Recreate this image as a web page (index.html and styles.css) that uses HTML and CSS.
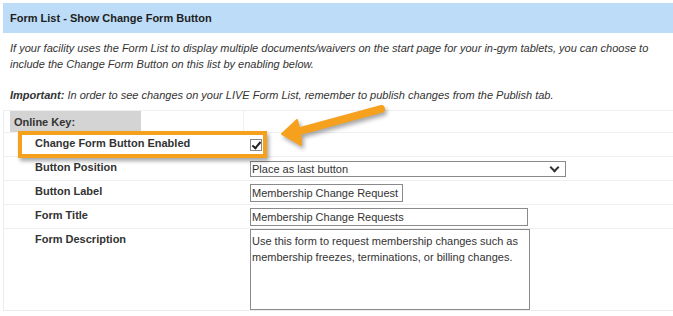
FILE: index.html
```html
<!DOCTYPE html>
<html lang="en">
<head>
    <meta charset="UTF-8">
    <meta name="viewport" content="width=device-width, initial-scale=1.0">
    <title>Form List - Show Change Form Button</title>
    <link rel="stylesheet" href="styles.css">
</head>
<body>
    <div class="page">
        <div class="section-title">Form List - Show Change Form Button</div>

        <p class="intro">If your facility uses the Form List to display multiple documents/waivers on the start page for your in-gym tablets, you can choose to include the Change Form Button on this list by enabling below.</p>
        <p class="intro important"><b>Important:</b> In order to see changes on your LIVE Form List, remember to publish changes from the Publish tab.</p>

        <table class="settings">
            <tr class="key-row">
                <td class="label-col"><span class="key-label">Online Key:</span></td>
                <td class="value-col"></td>
            </tr>
            <tr>
                <td class="label">Change Form Button Enabled</td>
                <td class="value"><input type="checkbox" class="check" checked></td>
            </tr>
            <tr>
                <td class="label">Button Position</td>
                <td class="value">
                    <span class="select-wrap">
                        <select class="position">
                            <option>Place as last button</option>
                            <option>Place as first button</option>
                        </select>
                    </span>
                </td>
            </tr>
            <tr>
                <td class="label">Button Label</td>
                <td class="value"><input type="text" class="field short" value="Membership Change Request"></td>
            </tr>
            <tr>
                <td class="label">Form Title</td>
                <td class="value"><input type="text" class="field wide" value="Membership Change Requests"></td>
            </tr>
            <tr class="desc-row">
                <td class="label">Form Description</td>
                <td class="value"><textarea class="description">Use this form to request membership changes such as membership freezes, terminations, or billing changes.</textarea></td>
            </tr>
        </table>

        <!-- annotation over the screenshot -->
        <div class="highlight"></div>
        <svg class="arrow" width="130" height="60" viewBox="0 0 130 60">
            <line x1="30" y1="36" x2="111" y2="14" stroke="#f6a11e" stroke-width="8" stroke-linecap="round"/>
            <path d="M12 39 L27 25 Q29 33 30 36 Q31 42 31 50 Z" fill="#f6a11e" stroke="#f6a11e" stroke-width="2" stroke-linejoin="round"/>
        </svg>
    </div>
</body>
</html>
```

FILE: styles.css
```css
* {
    box-sizing: border-box;
}

body {
    margin: 0;
    font-family: "Liberation Sans", Arial, sans-serif;
    font-size: 11px;
    color: #333;
    background: #fff;
    overflow: hidden;
}

.page {
    position: relative;
    padding: 3px 0 0 3px;
    height: 316px;
}

.section-title {
    height: 30px;
    line-height: 30px;
    padding-left: 7px;
    background-color: #bcdcf7;
    font-weight: bold;
    color: #1e1e1e;
}

.intro {
    margin: 7px 0 0;
    padding-left: 7px;
    font-style: italic;
    line-height: 16px;
}

.intro.important {
    margin-top: 15px;
}

.intro b {
    font-weight: bold;
}

/* settings table */
.settings {
    margin-top: 7px;
    width: 100%;
    border-collapse: separate;
    border-spacing: 0;
    border-left: 1px solid #ececec;
    border-bottom: 1px solid #ececec;
}

.settings td {
    border-top: 1px solid #efefef;
    height: 24px;
    padding: 0 6px;
}

.key-row td {
    height: 20px;
    vertical-align: top;
}

.label-col {
    width: 239px;
}

.value-col {
    border-left: 1px solid #efefef;
}

.key-label {
    display: inline-block;
    width: 131px;
    height: 21px;
    line-height: 22px;
    padding-left: 4px;
    background-color: #d4d4d4;
    font-weight: bold;
}

.settings .label {
    width: 239px;
    padding: 3px 6px 0 31px;
    vertical-align: top;
    line-height: 14px;
    font-weight: bold;
}

.settings .value {
    vertical-align: middle;
}

.desc-row td {
    height: 81px;
}

.desc-row .value {
    vertical-align: top;
}

/* inputs */
.check {
    appearance: none;
    -webkit-appearance: none;
    position: relative;
    display: block;
    width: 12px;
    height: 12px;
    margin: 0 0 0 1px;
    border: 1px solid #8a8a8a;
    background: #fff;
}

.check:checked::after {
    content: "";
    position: absolute;
    left: 3px;
    top: 0;
    width: 3px;
    height: 7px;
    border: solid #222;
    border-width: 0 2px 2px 0;
    transform: rotate(40deg);
}

.select-wrap {
    position: relative;
    display: inline-block;
}

.select-wrap::after {
    content: "";
    position: absolute;
    right: 8px;
    top: 3px;
    width: 5px;
    height: 5px;
    border: solid #333;
    border-width: 0 2px 2px 0;
    transform: rotate(45deg);
    pointer-events: none;
}

.position {
    appearance: none;
    -webkit-appearance: none;
    display: block;
    width: 316px;
    height: 16px;
    margin: 0 0 0 1px;
    padding: 0 1px;
    border: 1px solid #8a8a8a;
    border-radius: 0;
    background: #fff;
    font: 11px "Liberation Sans", Arial, sans-serif;
    color: #333;
}

.field {
    display: block;
    height: 18px;
    margin: 0 0 0 1px;
    padding: 0 1px;
    border: 1px solid #8a8a8a;
    font: 11px "Liberation Sans", Arial, sans-serif;
    color: #333;
}

.field.short {
    width: 153px;
}

.field.wide {
    width: 278px;
}

.description {
    display: block;
    width: 280px;
    height: 81px;
    margin: 0 0 0 1px;
    padding: 3px 1px;
    border: 1px solid #8a8a8a;
    font: 11px/16px "Liberation Sans", Arial, sans-serif;
    color: #333;
    resize: none;
    overflow: hidden;
}

/* annotation */
.highlight {
    position: absolute;
    left: 18px;
    top: 131px;
    width: 249px;
    height: 27px;
    border: 4px solid #f6a11e;
    box-shadow: 2px 3px 4px rgba(0, 0, 0, 0.35);
}

.arrow {
    position: absolute;
    left: 270px;
    top: 95px;
    overflow: visible;
    filter: drop-shadow(2px 3px 2px rgba(0, 0, 0, 0.35));
}
```
